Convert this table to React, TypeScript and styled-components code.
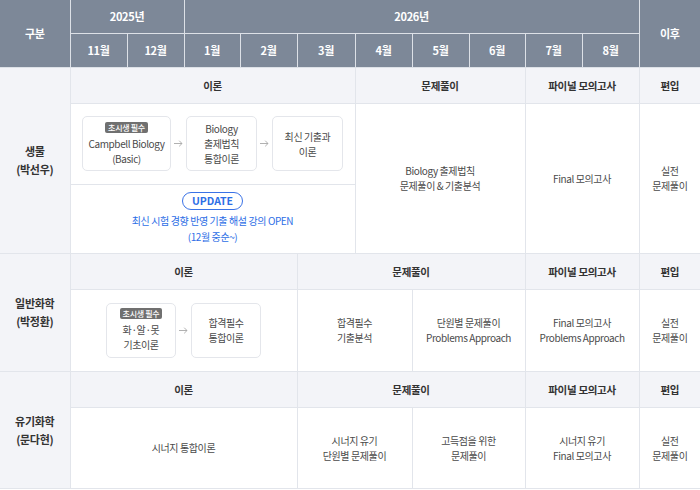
import React from 'react';
import styled, { createGlobalStyle } from 'styled-components';

const GlobalStyle = createGlobalStyle`
  html, body { margin: 0; padding: 0; background: #fff; }
  body {
    font-family: "Noto Sans CJK KR", "Noto Sans", sans-serif;
    -webkit-font-smoothing: antialiased;
  }
`;

const Table = styled.table`
  width: 700px;
  table-layout: fixed;
  border-collapse: collapse;
  border-spacing: 0;
  border-top: hidden;
  border-left: hidden;
  border-right: hidden;
  border-bottom: 1px solid #e2e5eb;
`;

const Col = styled.col<{ $w: number }>`
  width: ${(p) => p.$w}px;
`;

const HeadRow = styled.tr<{ $h: number }>`
  height: ${(p) => p.$h}px;
`;

const Head = styled.th`
  background: #7d8898;
  color: #fff;
  font-size: 11px;
  font-weight: 700;
  letter-spacing: -0.3px;
  border: 1px solid #dde1e7;
  padding: 0;
  text-align: center;
  vertical-align: middle;
`;

const Row = styled.tr<{ $h: number }>`
  height: ${(p) => p.$h}px;
`;

const Label = styled.th`
  background: #f3f4f8;
  color: #333;
  font-size: 11px;
  font-weight: 700;
  line-height: 18px;
  letter-spacing: -0.3px;
  border: 1px solid #e2e5eb;
  padding: 0;
  text-align: center;
  vertical-align: middle;
`;

const Phase = styled.td`
  background: #f3f4f8;
  color: #333;
  font-size: 10.5px;
  font-weight: 700;
  letter-spacing: -0.3px;
  border: 1px solid #e2e5eb;
  padding: 0;
  text-align: center;
  vertical-align: middle;
`;

const Cell = styled.td`
  background: #fff;
  color: #4a4a4a;
  font-size: 10px;
  line-height: 15px;
  letter-spacing: -0.4px;
  border: 1px solid #e2e5eb;
  padding: 0;
  text-align: center;
  vertical-align: middle;
`;

const Flow = styled.div`
  display: flex;
  align-items: center;
  justify-content: center;
  gap: 3px;
`;

const Step = styled.div<{ $w: number }>`
  width: ${(p) => p.$w}px;
  height: 55px;
  box-sizing: border-box;
  border: 1px solid #e4e6eb;
  border-radius: 5px;
  background: #fff;
  display: flex;
  flex-direction: column;
  align-items: center;
  justify-content: center;
  line-height: 15px;
`;

const Badge = styled.span`
  display: inline-block;
  height: 11px;
  line-height: 11px;
  padding: 0 3px;
  margin-bottom: 3px;
  border-radius: 2px;
  background: #707070;
  color: #fff;
  font-size: 8px;
  font-weight: 500;
  letter-spacing: -0.3px;
`;

const Update = styled.div`
  display: flex;
  flex-direction: column;
  align-items: center;
  color: #2d6ee6;
  line-height: 16px;
`;

const Pill = styled.span`
  box-sizing: border-box;
  height: 18px;
  padding: 0 9px;
  margin-bottom: 3px;
  border: 1px solid #3a72e6;
  border-radius: 9px;
  font-size: 10.5px;
  font-weight: 700;
  line-height: 16px;
  letter-spacing: 0;
`;

const Arrow = () => (
  <svg width="9" height="7" viewBox="0 0 9 7" fill="none">
    <path d="M0 3.5H8M5.2 0.7L8 3.5L5.2 6.3" stroke="#a8a8a8" strokeWidth="0.9" />
  </svg>
);

const widths = [70, 57, 57, 56, 57, 58, 57, 57, 56, 57, 57, 61];
const months = ['11월', '12월', '1월', '2월', '3월', '4월', '5월', '6월', '7월', '8월'];

export default function App() {
  return (
    <>
      <GlobalStyle />
      <Table>
        <colgroup>
          {widths.map((w, i) => (
            <Col key={i} $w={w} />
          ))}
        </colgroup>
        <thead>
          <HeadRow $h={33}>
            <Head rowSpan={2}>구분</Head>
            <Head colSpan={2}>2025년</Head>
            <Head colSpan={8}>2026년</Head>
            <Head rowSpan={2}>이후</Head>
          </HeadRow>
          <HeadRow $h={34}>
            {months.map((m) => (
              <Head key={m}>{m}</Head>
            ))}
          </HeadRow>
        </thead>
        <tbody>
          <Row $h={36}>
            <Label rowSpan={3}>
              생물
              <br />
              (박선우)
            </Label>
            <Phase colSpan={5}>이론</Phase>
            <Phase colSpan={3}>문제풀이</Phase>
            <Phase colSpan={2}>파이널 모의고사</Phase>
            <Phase>편입</Phase>
          </Row>
          <Row $h={81}>
            <Cell colSpan={5}>
              <Flow>
                <Step $w={89}>
                  <Badge>초시생 필수</Badge>
                  <span>Campbell Biology</span>
                  <span>(Basic)</span>
                </Step>
                <Arrow />
                <Step $w={71}>
                  <span>Biology</span>
                  <span>출제법칙</span>
                  <span>통합이론</span>
                </Step>
                <Arrow />
                <Step $w={71}>
                  <span>최신 기출과</span>
                  <span>이론</span>
                </Step>
              </Flow>
            </Cell>
            <Cell colSpan={3} rowSpan={2}>
              Biology 출제법칙
              <br />
              문제풀이 &amp; 기출분석
            </Cell>
            <Cell colSpan={2} rowSpan={2}>
              Final 모의고사
            </Cell>
            <Cell rowSpan={2}>
              실전
              <br />
              문제풀이
            </Cell>
          </Row>
          <Row $h={69}>
            <Cell colSpan={5}>
              <Update>
                <Pill>UPDATE</Pill>
                <span>최신 시험 경향 반영 기출 해설 강의 OPEN</span>
                <span>(12월 중순~)</span>
              </Update>
            </Cell>
          </Row>

          <Row $h={36}>
            <Label rowSpan={2}>
              일반화학
              <br />
              (박정환)
            </Label>
            <Phase colSpan={4}>이론</Phase>
            <Phase colSpan={4}>문제풀이</Phase>
            <Phase colSpan={2}>파이널 모의고사</Phase>
            <Phase>편입</Phase>
          </Row>
          <Row $h={82}>
            <Cell colSpan={4}>
              <Flow>
                <Step $w={70}>
                  <Badge>초시생 필수</Badge>
                  <span>화·알·못</span>
                  <span>기초이론</span>
                </Step>
                <Arrow />
                <Step $w={70}>
                  <span>합격필수</span>
                  <span>통합이론</span>
                </Step>
              </Flow>
            </Cell>
            <Cell colSpan={2}>
              합격필수
              <br />
              기출분석
            </Cell>
            <Cell colSpan={2}>
              단원별 문제풀이
              <br />
              Problems Approach
            </Cell>
            <Cell colSpan={2}>
              Final 모의고사
              <br />
              Problems Approach
            </Cell>
            <Cell>
              실전
              <br />
              문제풀이
            </Cell>
          </Row>

          <Row $h={36}>
            <Label rowSpan={2}>
              유기화학
              <br />
              (문다현)
            </Label>
            <Phase colSpan={4}>이론</Phase>
            <Phase colSpan={4}>문제풀이</Phase>
            <Phase colSpan={2}>파이널 모의고사</Phase>
            <Phase>편입</Phase>
          </Row>
          <Row $h={81}>
            <Cell colSpan={4}>시너지 통합이론</Cell>
            <Cell colSpan={2}>
              시너지 유기
              <br />
              단원별 문제풀이
            </Cell>
            <Cell colSpan={2}>
              고득점을 위한
              <br />
              문제풀이
            </Cell>
            <Cell colSpan={2}>
              시너지 유기
              <br />
              Final 모의고사
            </Cell>
            <Cell>
              실전
              <br />
              문제풀이
            </Cell>
          </Row>
        </tbody>
      </Table>
    </>
  );
}
